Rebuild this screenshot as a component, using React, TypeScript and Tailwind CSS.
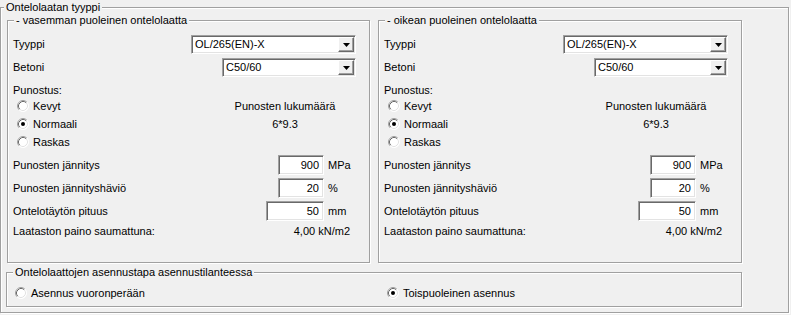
import React from "react";

function Radio({ checked }: { checked?: boolean }) {
  return (
    <svg width="12" height="12" viewBox="0 0 12 12" className="shrink-0">
      <circle cx="6" cy="6" r="5.5" fill="#ffffff" />
      <path d="M9.89 2.11 A5.5 5.5 0 0 0 2.11 9.89" stroke="#a0a0a0" strokeWidth="1" fill="none" />
      <path d="M9.18 2.82 A4.5 4.5 0 0 0 2.82 9.18" stroke="#696969" strokeWidth="1" fill="none" />
      <path d="M2.11 9.89 A5.5 5.5 0 0 0 9.89 2.11" stroke="#ffffff" strokeWidth="1" fill="none" />
      <path d="M2.82 9.18 A4.5 4.5 0 0 0 9.18 2.82" stroke="#e3e3e3" strokeWidth="1" fill="none" />
      {checked && <circle cx="6" cy="6" r="2" fill="#000000" />}
    </svg>
  );
}

function Combo({ wide, value }: { wide?: boolean; value: string }) {
  return (
    <div
      className={`${wide ? "w-[165px]" : "w-[134px]"} flex h-[19px] bg-white border border-t-[#a0a0a0] border-l-[#a0a0a0] border-b-white border-r-white shadow-[inset_1px_1px_0_#696969,inset_-1px_-1px_0_#e3e3e3] p-[1px]`}
    >
      <div className="flex-1 pl-[2px] leading-[15px]">{value}</div>
      <div className="w-[16px] h-full flex items-center justify-center bg-[#f0f0f0] border border-t-white border-l-white border-b-[#696969] border-r-[#696969] shadow-[inset_-1px_-1px_0_#a0a0a0]">
        <svg width="7" height="4" viewBox="0 0 7 4">
          <polygon points="0,0 7,0 3.5,4" fill="#000000" />
        </svg>
      </div>
    </div>
  );
}

function Field({ wide, value }: { wide?: boolean; value: string }) {
  return (
    <div
      className={`${wide ? "w-[58px]" : "w-[46px]"} h-[20px] bg-white border border-t-[#a0a0a0] border-l-[#a0a0a0] border-b-white border-r-white shadow-[inset_1px_1px_0_#696969,inset_-1px_-1px_0_#e3e3e3] text-right pr-[4px] leading-[18px]`}
    >
      {value}
    </div>
  );
}

function Title({ text, ml }: { text: string; ml: string }) {
  return (
    <div className={`-mt-[8px] ${ml} self-start px-[2px] h-[14px] leading-[14px] bg-[#f0f0f0]`}>{text}</div>
  );
}

function SidePanel({ title, right }: { title: string; right?: boolean }) {
  return (
    <div
      className={`${right ? "w-[364px] ml-[8px]" : "w-[363px]"} h-[243px] flex flex-col border border-[#a0a0a0] shadow-[1px_1px_0_#ffffff,inset_1px_1px_0_#ffffff] pl-[5px]`}
    >
      <Title text={title} ml="ml-[1px]" />
      <div className="mt-[8px] h-[19px] flex items-center">
        <span>Tyyppi</span>
        <div className="ml-auto mr-[13px]">
          <Combo wide value="OL/265(EN)-X" />
        </div>
      </div>
      <div className="mt-[4px] h-[19px] flex items-center">
        <span>Betoni</span>
        <div className="ml-auto mr-[13px]">
          <Combo value="C50/60" />
        </div>
      </div>
      <div className="mt-[6px] h-[14px] leading-[14px]">Punostus:</div>
      <div className="h-[18px] flex items-center">
        <div className="w-[207px] flex items-center pl-[4px]">
          <Radio />
          <span className="ml-[4px]">Kevyt</span>
        </div>
        <div className="w-[130px] text-center">Punosten lukumäärä</div>
      </div>
      <div className="h-[18px] flex items-center">
        <div className="w-[207px] flex items-center pl-[4px]">
          <Radio checked />
          <span className="ml-[4px]">Normaali</span>
        </div>
        <div className="w-[130px] text-center">6*9.3</div>
      </div>
      <div className="h-[18px] flex items-center">
        <div className="w-[207px] flex items-center pl-[4px]">
          <Radio />
          <span className="ml-[4px]">Raskas</span>
        </div>
      </div>
      <div className="mt-[4px] h-[20px] flex items-center">
        <span className="flex-1">Punosten jännitys</span>
        <Field value="900" />
        <span className="w-[45px] pl-[4px]">MPa</span>
      </div>
      <div className="mt-[3px] h-[20px] flex items-center">
        <span className="flex-1">Punosten jännityshäviö</span>
        <Field value="20" />
        <span className="w-[45px] pl-[4px]">%</span>
      </div>
      <div className="mt-[3px] h-[20px] flex items-center">
        <span className="flex-1">Ontelotäytön pituus</span>
        <Field wide value="50" />
        <span className="w-[45px] pl-[4px]">mm</span>
      </div>
      <div className="mt-[3px] h-[14px] leading-[14px] flex">
        <span>Laataston paino saumattuna:</span>
        <span className="ml-auto mr-[19px]">4,00 kN/m2</span>
      </div>
    </div>
  );
}

export default function App() {
  return (
    <div
      className="w-[791px] h-[315px] bg-[#f0f0f0] text-black text-[11px] overflow-hidden pt-[7px]"
      style={{ fontFamily: '"Liberation Sans", Arial, sans-serif' }}
    >
      <div className="w-[789px] h-[306px] flex flex-col border border-[#a0a0a0] shadow-[1px_1px_0_#ffffff,inset_1px_1px_0_#ffffff]">
        <Title text="Ontelolaatan tyyppi" ml="ml-[3px]" />
        <div className="mt-[6px] ml-[6px] flex">
          <SidePanel title="- vasemman puoleinen ontelolaatta" />
          <SidePanel title="- oikean puoleinen ontelolaatta" right />
        </div>
        <div className="mt-[9px] ml-[5px] w-[736px] h-[35px] flex flex-col border border-[#a0a0a0] shadow-[1px_1px_0_#ffffff,inset_1px_1px_0_#ffffff]">
          <Title text="Ontelolaattojen asennustapa asennustilanteessa" ml="ml-[6px]" />
          <div className="mt-[5px] h-[18px] flex items-center">
            <div className="w-[380px] flex items-center pl-[8px]">
              <Radio />
              <span className="ml-[4px]">Asennus vuoronperään</span>
            </div>
            <div className="flex items-center">
              <Radio checked />
              <span className="ml-[4px]">Toispuoleinen asennus</span>
            </div>
          </div>
        </div>
      </div>
    </div>
  );
}
